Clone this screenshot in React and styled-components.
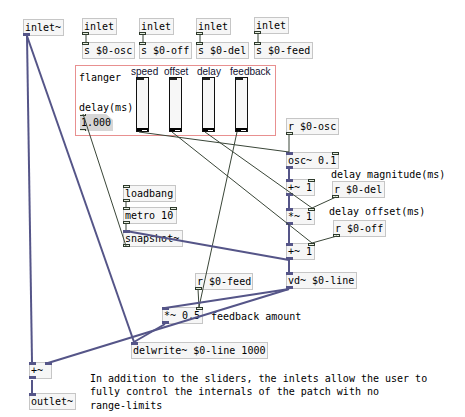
import styled, { createGlobalStyle } from 'styled-components';

const GlobalStyle = createGlobalStyle`
  html, body { margin: 0; padding: 0; background: #fff; }
`;

const SIG = '#555588';
const CTL = '#3a4638';

// pd objects: text, x, y, width, inlets, outlets ('s' signal, 'c' control)
const objects = [
  { t: 'inlet~', x: 23, y: 19, w: 41, out: ['s'] },
  { t: 'inlet', x: 82, y: 18, w: 35, out: ['c'] },
  { t: 's $0-osc', x: 82, y: 42, w: 53, in: ['c'] },
  { t: 'inlet', x: 139, y: 18, w: 35, out: ['c'] },
  { t: 's $0-off', x: 139, y: 42, w: 53, in: ['c'] },
  { t: 'inlet', x: 196, y: 18, w: 35, out: ['c'] },
  { t: 's $0-del', x: 196, y: 42, w: 53, in: ['c'] },
  { t: 'inlet', x: 254, y: 17, w: 35, out: ['c'] },
  { t: 's $0-feed', x: 254, y: 42, w: 59, in: ['c'] },
  { t: 'r $0-osc', x: 286, y: 118, w: 53, out: ['c'] },
  { t: 'osc~ 0.1', x: 286, y: 152, w: 53, in: ['s', 'c'], out: ['s'] },
  { t: '+~ 1', x: 286, y: 179, w: 29, in: ['s', 'c'], out: ['s'] },
  { t: 'r $0-del', x: 332, y: 181, w: 53, out: ['c'] },
  { t: '*~ 1', x: 286, y: 208, w: 29, in: ['s', 'c'], out: ['s'] },
  { t: 'r $0-off', x: 333, y: 220, w: 53, out: ['c'] },
  { t: '+~ 1', x: 286, y: 243, w: 29, in: ['s', 'c'], out: ['s'] },
  { t: 'vd~ $0-line', x: 286, y: 272, w: 71, in: ['s'], out: ['s'] },
  { t: 'r $0-feed', x: 195, y: 273, w: 58, out: ['c'] },
  { t: '*~ 0.5', x: 162, y: 307, w: 41, in: ['s', 'c'], out: ['s'] },
  { t: 'delwrite~ $0-line 1000', x: 131, y: 342, w: 137, in: ['s'] },
  { t: '+~', x: 29, y: 362, w: 23, in: ['s', 's'], out: ['s'] },
  { t: 'outlet~', x: 29, y: 393, w: 47, in: ['s'] },
  { t: 'loadbang', x: 123, y: 185, w: 53, in: ['c'], out: ['c'] },
  { t: 'metro 10', x: 123, y: 207, w: 54, in: ['c', 'c'], out: ['c'] },
  { t: 'snapshot~', x: 123, y: 230, w: 60, in: ['s'], out: ['c'] },
];

const comments = [
  { t: 'flanger', x: 79, y: 71 },
  { t: 'delay(ms)', x: 79, y: 101 },
  { t: 'delay magnitude(ms)', x: 331, y: 168 },
  { t: 'delay offset(ms)', x: 329, y: 205 },
  { t: 'feedback amount', x: 211, y: 310 },
  {
    t: 'In addition to the sliders, the inlets allow the user to\nfully control the internals of the patch with no\nrange-limits',
    x: 90,
    y: 372,
  },
];

const sliders = ['speed', 'offset', 'delay', 'feedback'];

const cords = [
  // control
  ['c', 86, 35, 86, 43],
  ['c', 143, 35, 143, 43],
  ['c', 200, 35, 200, 43],
  ['c', 258, 34, 258, 43],
  ['c', 126, 246, 83, 114],
  ['c', 126, 202, 126, 207],
  ['c', 126, 224, 126, 230],
  ['c', 139, 132, 289, 152],
  ['c', 172, 132, 312, 243],
  ['c', 205, 132, 312, 208],
  ['c', 237, 132, 199, 307],
  ['c', 289, 134, 289, 152],
  ['c', 336, 197, 312, 208],
  ['c', 337, 236, 312, 243],
  ['c', 198, 289, 199, 307],
  // signal
  ['s', 27, 36, 32, 362],
  ['s', 27, 36, 134, 342],
  ['s', 289, 169, 289, 179],
  ['s', 289, 196, 289, 208],
  ['s', 289, 225, 289, 243],
  ['s', 289, 260, 289, 272],
  ['s', 289, 260, 126, 231],
  ['s', 289, 289, 165, 308],
  ['s', 289, 289, 48, 363],
  ['s', 165, 324, 134, 342],
  ['s', 32, 380, 32, 393],
];

export default function App() {
  return (
    <>
      <GlobalStyle />
      <Canvas>
        <GopFrame />
        {comments.map((c, i) => (
          <Comment key={i} $x={c.x} $y={c.y}>
            {c.t}
          </Comment>
        ))}
        <NumberBox $x={80} $y={114}>
          <Nub $edge="top" $at="left" $kind="c" />
          1.000
          <Nub $edge="bottom" $at="left" $kind="c" />
        </NumberBox>
        <SliderRow>
          {sliders.map((s) => (
            <SliderCol key={s}>
              <SliderLabel>{s}</SliderLabel>
              <Slider>
                <SliderInlet />
                <SliderThumb />
              </Slider>
            </SliderCol>
          ))}
        </SliderRow>
        {objects.map((o, i) => (
          <ObjBox key={i} $x={o.x} $y={o.y} $w={o.w}>
            {o.t}
            {(o.in || []).map((k, j) => (
              <Nub key={'i' + j} $edge="top" $at={j === 0 ? 'left' : 'right'} $kind={k} />
            ))}
            {(o.out || []).map((k, j) => (
              <Nub key={'o' + j} $edge="bottom" $at={j === 0 ? 'left' : 'right'} $kind={k} />
            ))}
          </ObjBox>
        ))}
        <Cords width="465" height="417">
          {cords.map(([k, x1, y1, x2, y2], i) => (
            <line
              key={i}
              x1={x1}
              y1={y1}
              x2={x2}
              y2={y2}
              stroke={k === 's' ? SIG : CTL}
              strokeWidth={k === 's' ? 2 : 1}
            />
          ))}
        </Cords>
      </Canvas>
    </>
  );
}

const Canvas = styled.div`
  position: relative;
  width: 465px;
  height: 417px;
  overflow: hidden;
  background: #fff;
  font-family: "DejaVu Sans Mono", monospace;
  font-size: 10px;
  color: #000;
`;

const Cords = styled.svg`
  position: absolute;
  left: 0;
  top: 0;
  pointer-events: none;
`;

const GopFrame = styled.div`
  position: absolute;
  left: 75px;
  top: 65px;
  width: 199px;
  height: 69px;
  border: 1px solid #e89090;
`;

const ObjBox = styled.div`
  position: absolute;
  left: ${(p) => p.$x}px;
  top: ${(p) => p.$y}px;
  width: ${(p) => p.$w}px;
  height: 17px;
  box-sizing: border-box;
  border: 1px solid #c6c6c6;
  background: #f6f6f6;
  padding: 0 1px;
  line-height: 15px;
  white-space: pre;
`;

const NumberBox = styled.div`
  position: absolute;
  left: ${(p) => p.$x}px;
  top: ${(p) => p.$y}px;
  width: 33px;
  height: 17px;
  box-sizing: border-box;
  padding: 0 1px;
  line-height: 17px;
  background: #d6d6d6;
  clip-path: polygon(0 0, 26px 0, 33px 6px, 33px 100%, 0 100%);
`;

const Nub = styled.span`
  position: absolute;
  ${(p) => (p.$edge === 'top' ? 'top: -1px;' : 'bottom: -1px;')}
  ${(p) => (p.$at === 'left' ? 'left: -1px;' : 'right: -1px;')}
  width: 7px;
  height: 3px;
  box-sizing: border-box;
  background: ${(p) => (p.$kind === 's' ? SIG : '#e6eedf')};
  border: 1px solid ${(p) => (p.$kind === 's' ? SIG : '#2e3a2c')};
`;

const Comment = styled.div`
  position: absolute;
  left: ${(p) => p.$x}px;
  top: ${(p) => p.$y}px;
  line-height: 13.3px;
  white-space: pre;
`;

const SliderRow = styled.div`
  position: absolute;
  left: 136px;
  top: 66px;
  display: flex;
  gap: 20px;
`;

const SliderCol = styled.div`
  display: flex;
  flex-direction: column;
  width: 13px;
`;

const SliderLabel = styled.div`
  margin-left: -5px;
  height: 11px;
  line-height: 11px;
  font-family: "Liberation Sans", Arial, sans-serif;
  font-size: 10px;
  color: #101030;
  white-space: nowrap;
`;

const Slider = styled.div`
  position: relative;
  width: 13px;
  height: 55px;
  box-sizing: border-box;
  border: 1px solid #111;
  background: #f7f7f7;
`;

const SliderInlet = styled.span`
  position: absolute;
  left: 0;
  top: 0;
  width: 7px;
  height: 2px;
  background: #222;
`;

const SliderThumb = styled.span`
  position: absolute;
  left: 0;
  right: 0;
  bottom: 0;
  height: 3px;
  background: #000;
  &::after {
    content: '';
    position: absolute;
    right: 1px;
    bottom: 0;
    width: 5px;
    height: 1px;
    background: #fff;
  }
`;
